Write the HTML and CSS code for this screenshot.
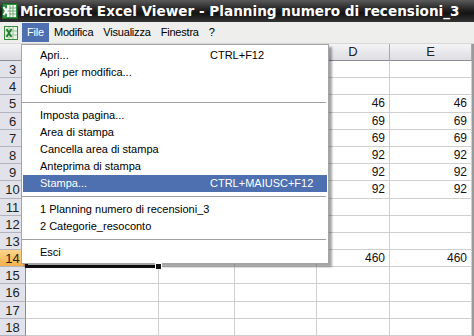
FILE: index.html
```html
<!DOCTYPE html>
<html>
<head>
  <title>Microsoft Excel Viewer</title>
  <meta charset="UTF-8">
  <link rel="stylesheet" href="styles.css">
</head>
<body>
  <div class="window">
    <!-- barra del titolo -->
    <div class="titlebar">
      <svg class="app-icon" width="16" height="16" viewBox="0 0 16 16">
        <rect x="0.5" y="0.5" width="15" height="15" fill="#2f8f3e" stroke="#1b5e26"/>
        <rect x="5" y="2" width="9" height="12" fill="#fff"/>
        <path d="M5 5h9M5 8h9M5 11h9M8 2v12M11 2v12" stroke="#6aa86f" stroke-width="1"/>
        <path d="M1.5 4l5 8M6.5 4l-5 8" stroke="#fff" stroke-width="2"/>
      </svg>
      <span class="title">Microsoft Excel Viewer - Planning numero di recensioni_3</span>
    </div>

    <!-- barra dei menu -->
    <div class="menubar">
      <svg class="doc-icon" width="14" height="14" viewBox="0 0 14 14">
        <rect x="0.5" y="0.5" width="13" height="13" fill="#e9f3e6" stroke="#3b8a3f"/>
        <path d="M5 1v12M9 1v12M1 5h12M1 9h12" stroke="#9cc59a"/>
        <path d="M2.5 3l5 8M7.5 3l-5 8" stroke="#1f7a2c" stroke-width="1.8"/>
      </svg>
      <span class="menu-item active">File</span>
      <span class="menu-item">Modifica</span>
      <span class="menu-item">Visualizza</span>
      <span class="menu-item">Finestra</span>
      <span class="menu-item">?</span>
    </div>

    <div class="sheet-area">
      <div class="sheet">
        <div class="corner"></div><div class="col-head">A</div><div class="col-head">B</div><div class="col-head">C</div><div class="col-head">D</div><div class="col-head">E</div><div class="edge"></div>

        <div class="row-head">3</div><div class="cell"></div><div class="cell"></div><div class="cell"></div><div class="cell"></div><div class="cell"></div><div class="edge"></div>
        <div class="row-head">4</div><div class="cell"></div><div class="cell"></div><div class="cell"></div><div class="cell"></div><div class="cell"></div><div class="edge"></div>
        <div class="row-head">5</div><div class="cell"></div><div class="cell"></div><div class="cell"></div><div class="cell">46</div><div class="cell">46</div><div class="edge"></div>
        <div class="row-head">6</div><div class="cell"></div><div class="cell"></div><div class="cell"></div><div class="cell">69</div><div class="cell">69</div><div class="edge"></div>
        <div class="row-head">7</div><div class="cell"></div><div class="cell"></div><div class="cell"></div><div class="cell">69</div><div class="cell">69</div><div class="edge"></div>
        <div class="row-head">8</div><div class="cell"></div><div class="cell"></div><div class="cell"></div><div class="cell">92</div><div class="cell">92</div><div class="edge"></div>
        <div class="row-head">9</div><div class="cell"></div><div class="cell"></div><div class="cell"></div><div class="cell">92</div><div class="cell">92</div><div class="edge"></div>
        <div class="row-head">10</div><div class="cell"></div><div class="cell"></div><div class="cell"></div><div class="cell">92</div><div class="cell">92</div><div class="edge"></div>
        <div class="row-head">11</div><div class="cell"></div><div class="cell"></div><div class="cell"></div><div class="cell"></div><div class="cell"></div><div class="edge"></div>
        <div class="row-head">12</div><div class="cell"></div><div class="cell"></div><div class="cell"></div><div class="cell"></div><div class="cell"></div><div class="edge"></div>
        <div class="row-head">13</div><div class="cell"></div><div class="cell"></div><div class="cell"></div><div class="cell"></div><div class="cell"></div><div class="edge"></div>
        <div class="row-head selected">14</div><div class="cell current"></div><div class="cell"></div><div class="cell"></div><div class="cell">460</div><div class="cell">460</div><div class="edge"></div>
        <div class="row-head">15</div><div class="cell"></div><div class="cell"></div><div class="cell"></div><div class="cell"></div><div class="cell"></div><div class="edge"></div>
        <div class="row-head">16</div><div class="cell"></div><div class="cell"></div><div class="cell"></div><div class="cell"></div><div class="cell"></div><div class="edge"></div>
        <div class="row-head">17</div><div class="cell"></div><div class="cell"></div><div class="cell"></div><div class="cell"></div><div class="cell"></div><div class="edge"></div>
        <div class="row-head">18</div><div class="cell"></div><div class="cell"></div><div class="cell"></div><div class="cell"></div><div class="cell"></div><div class="edge"></div>
      </div>

      <!-- menu File aperto -->
      <div class="dropdown">
        <div class="dd-item"><span>Apri...</span><span>CTRL+F12</span></div>
        <div class="dd-item"><span>Apri per modifica...</span><span></span></div>
        <div class="dd-item"><span>Chiudi</span><span></span></div>
        <div class="dd-sep"></div>
        <div class="dd-item"><span>Imposta pagina...</span><span></span></div>
        <div class="dd-item"><span>Area di stampa</span><span></span></div>
        <div class="dd-item"><span>Cancella area di stampa</span><span></span></div>
        <div class="dd-item"><span>Anteprima di stampa</span><span></span></div>
        <div class="dd-item hover"><span>Stampa...</span><span>CTRL+MAIUSC+F12</span></div>
        <div class="dd-sep"></div>
        <div class="dd-item"><span>1 Planning numero di recensioni_3</span><span></span></div>
        <div class="dd-item"><span>2 Categorie_resoconto</span><span></span></div>
        <div class="dd-sep"></div>
        <div class="dd-item"><span>Esci</span><span></span></div>
      </div>
    </div>
  </div>
</body>
</html>
```

FILE: styles.css
```css
body {
  margin: 0;
  font-family: 'Liberation Sans', Arial, sans-serif;
  background: #fff;
}
.window {
  width: 474px;
  height: 336px;
  overflow: hidden;
}
.titlebar {
  height: 22px;
  display: flex;
  align-items: center;
  background: linear-gradient(#5a5a5a, #262626 40%, #141414 60%, #333333);
  color: #fff;
}
.app-icon {
  margin: 0 2px 0 2px;
}
.title {
  font-family: 'DejaVu Sans', sans-serif;
  font-weight: bold;
  font-size: 13.6px;
  white-space: nowrap;
}
.menubar {
  height: 22px;
  display: flex;
  align-items: center;
  background: #eeeeec;
  font-size: 11px;
  letter-spacing: -0.2px;
  color: #000;
  border-bottom: 1px solid #d8d8d8;
  box-sizing: border-box;
}
.doc-icon {
  margin: 0 4px 0 4px;
}
.menu-item {
  padding: 0 5px;
  line-height: 19px;
}
.menu-item.active {
  background: #4e6fb0;
  color: #fff;
}
.sheet-area {
  position: relative;
}
.sheet {
  display: grid;
  grid-template-columns: 26px 133px 76px 82px 73px 82px 2px;
  grid-template-rows: 17px;
  grid-auto-rows: 17.2px;
  font-size: 12px;
}
.corner, .col-head {
  background: linear-gradient(#f4f4f6, #dcdce2);
  border-right: 1px solid #a8a8b0;
  border-bottom: 1px solid #8c8c94;
  box-sizing: border-box;
}
.col-head {
  text-align: center;
  font-size: 13px;
  line-height: 16px;
  color: #222;
}
.row-head {
  background: #e2e2ea;
  border-right: 1px solid #8c8c94;
  border-bottom: 1px solid #b4b4be;
  box-sizing: border-box;
  text-align: center;
  font-size: 13px;
  line-height: 17px;
  color: #222;
}
.row-head.selected {
  background: linear-gradient(#fbd48a, #f3b14e);
}
.cell {
  border-right: 1px solid #cfcfcf;
  border-bottom: 1px solid #cfcfcf;
  box-sizing: border-box;
  text-align: right;
  padding-right: 4px;
  line-height: 17px;
  color: #111;
}
.cell.current {
  position: relative;
}
.cell.current::after {
  content: "";
  position: absolute;
  left: -1px;
  right: -1px;
  top: -2px;
  bottom: -2px;
  border: 3px solid #111;
}
.cell.current::before {
  content: "";
  position: absolute;
  right: -4px;
  bottom: -4px;
  width: 5px;
  height: 5px;
  background: #111;
  border: 1px solid #fff;
  z-index: 1;
}
.edge {
  background: #9a9a9a;
}
.dropdown {
  position: absolute;
  top: 0;
  left: 21px;
  width: 308px;
  padding: 2px 0;
  background: #fff;
  border: 1px solid #a4a4a4;
  box-sizing: border-box;
  box-shadow: 3px 3px 2px rgba(0, 0, 0, 0.35);
  font-size: 11px;
  color: #000;
}
.dd-item {
  display: grid;
  grid-template-columns: 170px auto;
  height: 17px;
  line-height: 17px;
  padding-left: 17px;
  margin: 0 1px;
  white-space: nowrap;
}
.dd-item.hover {
  background: #4e6fb0;
  color: #fff;
}
.dd-sep {
  height: 9px;
  display: flex;
  align-items: center;
  padding: 0 2px 0 0;
}
.dd-sep::before {
  content: "";
  flex: 1;
  border-top: 1px solid #a0a0a0;
}
```
